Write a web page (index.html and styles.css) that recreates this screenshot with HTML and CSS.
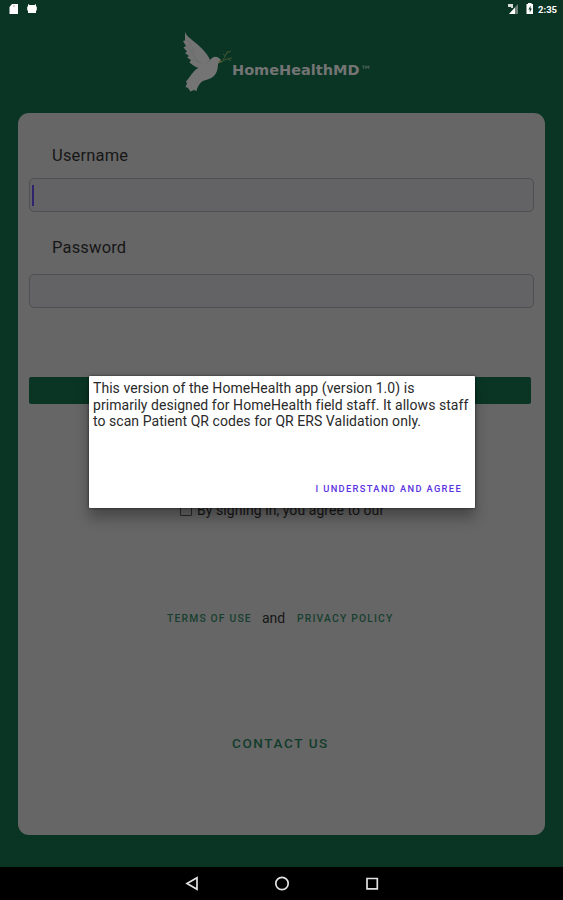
FILE: index.html
```html
<!DOCTYPE html>
<html lang="en">
<head>
    <meta charset="UTF-8">
    <meta name="viewport" content="width=device-width, initial-scale=1.0">
    <title>HomeHealthMD</title>
    <link rel="stylesheet" href="styles.css">
</head>
<body>
    <div class="status-bar">
        <svg class="status-left" width="20" height="18" viewBox="0 0 20 18">
            <path d="M12 4h6v10H9.500V7z" fill="#fff"/>
            <path d="M13.500 5h1v2h-1z" fill="#aaa"/>
        </svg>
        <svg class="status-android" width="10" height="18" viewBox="0 0 10 18">
            <path d="M1 4l1.500 1h5L9 4v2.500h.8v4H9V13H1v-2.500H.2v-4H1z" fill="#fff"/>
        </svg>
        <svg class="status-right" width="28" height="18" viewBox="0 0 28 18">
            <path d="M11 4v10H2z" fill="#6c8077"/>
            <path d="M8 7.500V14H2z" fill="#fff"/>
            <path d="M1 4h5v4H4V7H1z" fill="#d5dbd8"/>
            <path d="M19.500 4H21V3h3.500v1H26v10h-6.500z" fill="#fff"/>
            <path d="M23.500 5.500L21.500 9.500h1.300v3l2-4h-1.300z" fill="#0a3525"/>
        </svg>
        <span class="clock">2:35</span>
    </div>

    <div class="logo">
        <svg class="dove" width="54" height="64" viewBox="0 0 54 64">
            <!-- Wing -->
            <path d="M5 1.500C6 6 10 8 17 14C23 19 28 25 30 30L23 38C16 39 12 34 9.500 32.500L11 30L7 27.500L9 26L5 23L7 21.500L3.500 17.500L6 16L3 11L5 10.500Z" fill="#747474"/>
            <!-- Body and tail -->
            <path d="M41 30C39 27 35 25.500 32 28C28 32 24 36 18 38C13 41 11 46 6 51.500L7 53.500L5.500 57L8 58L10.500 61.500L14 60L16.500 61C18 55 21 51 26 50C34 48 38 43 38 34Z" fill="#747474"/>
            <path d="M8 10L15 22M7 16L16 27M9 22L19 32M12 29L22 34" stroke="#626866" stroke-width=".6" fill="none"/>
            <!-- Olive branch -->
            <path d="M39 33C43 31 47 28 52 28M43 30L48 21M46 26L43 24M47 23L51 21M48 29L51 31" stroke="#3e5630" stroke-width="1" fill="none"/>
            <path d="M39 30.500L43 32L39 32.500Z" fill="#66602c"/>
        </svg>
        <span class="brand">HomeHealthMD</span><span class="tm">™</span>
    </div>

    <div class="card">
        <label class="label" for="username">Username</label>
        <div class="field"><span class="caret"></span></div>
        <label class="label label-password" for="password">Password</label>
        <div class="field"></div>
        <div class="sign-in"></div>
        <div class="agree"><span class="checkbox"></span>By signing in, you agree to our</div>
        <div class="links">
            <span class="link terms">TERMS OF USE</span>
            <span class="and">and</span>
            <span class="link privacy">PRIVACY POLICY</span>
        </div>
        <div class="contact">CONTACT US</div>
    </div>

    <div class="nav-bar">
        <svg width="200" height="33" viewBox="0 0 200 33" fill="none" stroke="#e2e2e2" stroke-width="1.700">
            <path d="M16 10.800v11.400L6 16.500z"/>
            <circle cx="101" cy="16.500" r="6.200"/>
            <path d="M186 11.500h10.300v10.300H186z"/>
        </svg>
    </div>

    <div class="dialog">
        <p>This version of the HomeHealth app (version 1.0) is<br>primarily designed for HomeHealth field staff. It allows staff<br>to scan Patient QR codes for QR ERS Validation only.</p>
        <div class="dialog-button">I UNDERSTAND AND AGREE</div>
    </div>
</body>
</html>
```

FILE: styles.css
```css
* {
    margin: 0;
    padding: 0;
    box-sizing: border-box;
}

body {
    font-family: Roboto, sans-serif;
    background: #0a3525;
    color: #161616;
    display: flex;
    flex-direction: column;
    height: 900px;
    overflow: hidden;
    white-space: nowrap;
}

.status-bar {
    display: flex;
    height: 18px;
    flex: none;
}

.status-bar svg {
    flex: none;
}

.status-android {
    margin-left: 7px;
}

.status-right {
    margin-left: 470px;
}

.clock {
    margin-left: 3px;
    font-size: 9.5px;
    line-height: 19px;
    font-weight: 700;
    color: #fff;
}

/* Logo */
.logo {
    display: flex;
    height: 95px;
    padding: 12px 0 0 180px;
    flex: none;
}

.brand {
    width: 128px;
    margin: 32px 0 0 -2px;
    font-family: "DejaVu Sans", sans-serif;
    font-weight: 700;
    font-size: 14.5px;
    line-height: 17px;
    color: #747474;
}

.tm {
    margin-top: 32px;
    font-family: "DejaVu Sans", sans-serif;
    font-size: 11.5px;
    line-height: 16px;
    color: #66716c;
}

/* Login card */
.card {
    height: 722px;
    margin: 0 18px;
    padding: 32px 11px 0;
    background: #666;
    border-radius: 11px;
    flex: none;
}

.label {
    display: block;
    height: 22px;
    margin-bottom: 11px;
    padding-left: 23px;
    font-size: 16.5px;
    line-height: 22px;
    letter-spacing: 0.18px;
}

.label-password {
    margin-top: 25px;
    margin-bottom: 15px;
}

.field {
    height: 34px;
    padding: 6px 0 0 2px;
    background: #636366;
    border: 1px solid #505052;
    border-radius: 5px;
}

.caret {
    display: block;
    width: 2px;
    height: 21px;
    background: #30246c;
}

.sign-in {
    height: 27px;
    margin: 69px 3px 0 0;
    background: #0a3525;
    border-radius: 2px;
}

.agree {
    display: flex;
    align-items: center;
    height: 20px;
    margin: 96px 0 0 151px;
    font-size: 14px;
    letter-spacing: 0.06px;
}

.checkbox {
    width: 12px;
    height: 12px;
    margin-right: 5px;
    border: 1px solid #292929;
    border-radius: 1px;
}

.links {
    display: flex;
    height: 20px;
    margin: 88px 0 0 138px;
    line-height: 20px;
}

.link {
    font-size: 10.3px;
    font-weight: 500;
    letter-spacing: 1.2px;
    line-height: 22px;
    color: #173f2f;
}

.terms {
    width: 95px;
}

.and {
    width: 35px;
    font-size: 14px;
}

.contact {
    margin: 105px 0 0 203px;
    font-size: 13.5px;
    font-weight: 500;
    letter-spacing: 1.6px;
    line-height: 20px;
    color: #123c2b;
}

.nav-bar {
    display: flex;
    height: 33px;
    margin-top: auto;
    padding-left: 181px;
    background: #000;
    flex: none;
}

/* Agreement dialog */
.dialog {
    position: absolute;
    left: 89px;
    top: 376px;
    width: 386px;
    height: 132px;
    padding: 4px;
    background: #fff;
    border-radius: 1px;
    color: #2a2a2a;
    box-shadow: 0 0 3px rgba(0, 0, 0, 0.6), 0 10px 14px rgba(0, 0, 0, 0.3);
}

.dialog p {
    font-size: 14px;
    line-height: 16.6px;
    letter-spacing: 0.05px;
}

.dialog-button {
    margin: 49px 9px 0 0;
    font-size: 9.3px;
    font-weight: 500;
    letter-spacing: 1.35px;
    line-height: 20px;
    text-align: right;
    color: #5a32e0;
}
```
